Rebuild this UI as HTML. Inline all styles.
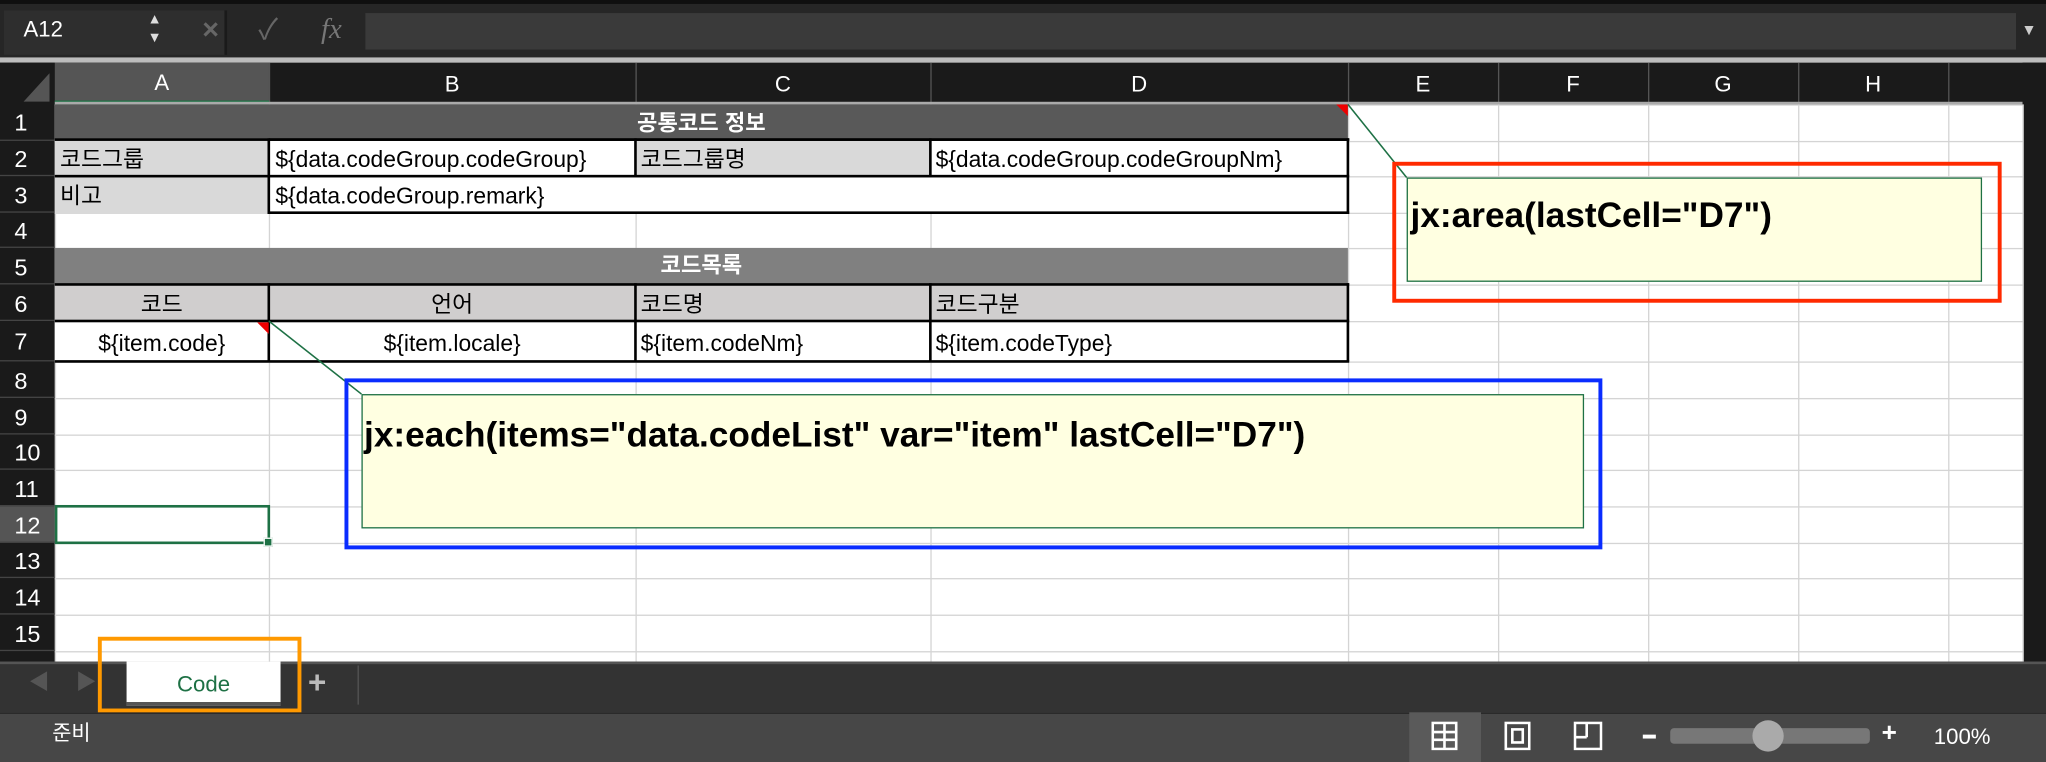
<!DOCTYPE html>
<html><head><meta charset="utf-8">
<style>
html,body{margin:0;padding:0;background:#1e1e1e;overflow:hidden}
#s{position:absolute;left:0;top:0;width:1568px;height:584px;transform:scale(1.30485);transform-origin:0 0;background:#fff;font-family:"Liberation Sans","Noto Sans CJK KR",sans-serif;overflow:hidden}
.a{position:absolute;box-sizing:border-box}
.t{position:absolute;white-space:nowrap;font-size:17.5px;color:#000;line-height:1}
.hv{background:#d4d4d4;width:1px}
.hh{background:#d4d4d4;height:1px}
.ch{position:absolute;top:48px;height:32px;line-height:34px;text-align:center;color:#fff;font-size:17px;border-right:1px solid #555}
.rh{position:absolute;left:0;width:42px;color:#fff;font-size:18px;padding-left:11px;box-sizing:border-box;border-bottom:1px solid #444}
</style></head><body>
<div id="s">
<div class="a" style="left:0;top:0;width:1568px;height:46px;background:#262626"></div>
<div class="a" style="left:0;top:0;width:1568px;height:3px;background:#0f0f0f"></div>
<div class="a" style="left:3px;top:8px;width:170px;height:34px;background:#2e2e2e"></div>
<div class="t" style="left:18px;top:14px;color:#fff;font-size:17px">A12</div>
<div class="t" style="left:113px;top:8px;color:#ddd;font-size:11px;line-height:14px">▲<br>▼</div>
<div class="a" style="left:172px;top:8px;width:2px;height:34px;background:#1a1a1a"></div>
<div class="t" style="left:155px;top:12px;color:#666;font-size:22px;font-weight:bold">×</div>
<div class="t" style="left:198px;top:12px;color:#666;font-size:22px">✓</div>
<div class="t" style="left:246px;top:11px;color:#777;font-size:22px;font-style:italic;font-family:'Liberation Serif',serif">fx</div>
<div class="a" style="left:280px;top:10px;width:1265px;height:28px;background:#3a3a3a"></div>
<div class="t" style="left:1549px;top:17px;color:#ccc;font-size:12px">▼</div>
<div class="a" style="left:0;top:44px;width:1568px;height:4px;background:#bdbdbd"></div>
<div class="a" style="left:0;top:48px;width:1568px;height:32px;background:#1a1a1a"></div>
<div class="a" style="left:0;top:48px;width:42px;height:459px;background:#1a1a1a"></div>
<svg class="a" style="left:18px;top:56px" width="20" height="22"><polygon points="20,0 20,22 0,22" fill="#555"/></svg>
<div class="ch" style="left:42px;width:164px;background:#555;border-bottom:3px solid #1e7145;height:29px;line-height:32px">A</div>
<div class="ch" style="left:206px;width:281px">B</div>
<div class="ch" style="left:487px;width:226px">C</div>
<div class="ch" style="left:713px;width:320px">D</div>
<div class="ch" style="left:1033px;width:115px">E</div>
<div class="ch" style="left:1148px;width:115px">F</div>
<div class="ch" style="left:1263px;width:115px">G</div>
<div class="ch" style="left:1378px;width:115px">H</div>
<div class="ch" style="left:1493px;width:57px;text-align:left;padding-left:57px">I</div>
<div class="a" style="left:1550px;top:48px;width:18px;height:459px;background:#1a1a1a"></div>
<div class="a" style="left:42px;top:78px;width:1508px;height:2px;background:#aaa"></div>
<div id="grid"></div>
<div id="rows"></div>
<div class="a" style="left:42px;top:80px;width:991px;height:27px;background:#595959;color:#fff;font-weight:bold;font-size:17px;text-align:center;line-height:29px">공통코드 정보</div>
<svg class="a" style="left:1024px;top:80px" width="9" height="9"><polygon points="0,0 9,0 9,9" fill="#e00"/></svg>
<div class="a" style="left:206px;top:107px;width:828px;height:57px;background:#fff"></div>
<div class="a" style="left:42px;top:107px;width:165px;height:57px;background:#d9d9d9"></div>
<div class="a" style="left:487px;top:107px;width:227px;height:29px;background:#d9d9d9"></div>
<div class="a" style="left:206px;top:106px;width:828px;height:58px;border:2px solid #000;border-left:0"></div>
<div class="a" style="left:42px;top:106px;width:992px;height:2px;background:#000"></div>
<div class="a" style="left:42px;top:134px;width:992px;height:2px;background:#000"></div>
<div class="a" style="left:205px;top:106px;width:2px;height:58px;background:#000"></div>
<div class="a" style="left:486px;top:106px;width:2px;height:29px;background:#000"></div>
<div class="a" style="left:712px;top:106px;width:2px;height:29px;background:#000"></div>
<div class="t" style="left:46px;top:114px">코드그룹</div>
<div class="t" style="left:211px;top:114px">${data.codeGroup.codeGroup}</div>
<div class="t" style="left:491px;top:114px">코드그룹명</div>
<div class="t" style="left:717px;top:114px">${data.codeGroup.codeGroupNm}</div>
<div class="t" style="left:46px;top:142px">비고</div>
<div class="t" style="left:211px;top:142px">${data.codeGroup.remark}</div>
<div class="a" style="left:42px;top:190px;width:991px;height:28px;background:#808080;color:#fff;font-weight:bold;font-size:17px;text-align:center;line-height:28px">코드목록</div>
<div class="a" style="left:42px;top:218px;width:991px;height:28px;background:#d0cece"></div>
<div class="a" style="left:42px;top:246px;width:991px;height:31px;background:#fff"></div>
<div class="a" style="left:42px;top:217px;width:992px;height:2px;background:#000"></div>
<div class="a" style="left:42px;top:245px;width:992px;height:2px;background:#000"></div>
<div class="a" style="left:42px;top:276px;width:992px;height:2px;background:#000"></div>
<div class="a" style="left:205px;top:217px;width:2px;height:60px;background:#000"></div>
<div class="a" style="left:486px;top:217px;width:2px;height:60px;background:#000"></div>
<div class="a" style="left:712px;top:217px;width:2px;height:60px;background:#000"></div>
<div class="a" style="left:1032px;top:217px;width:2px;height:60px;background:#000"></div>
<div class="t" style="left:42px;width:164px;text-align:center;top:225px">코드</div>
<div class="t" style="left:206px;width:281px;text-align:center;top:225px">언어</div>
<div class="t" style="left:491px;top:225px">코드명</div>
<div class="t" style="left:717px;top:225px">코드구분</div>
<div class="t" style="left:42px;width:164px;text-align:center;top:255px">${item.code}</div>
<div class="t" style="left:206px;width:281px;text-align:center;top:255px">${item.locale}</div>
<div class="t" style="left:491px;top:255px">${item.codeNm}</div>
<div class="t" style="left:717px;top:255px">${item.codeType}</div>
<svg class="a" style="left:197px;top:247px" width="9" height="9"><polygon points="0,0 9,0 9,9" fill="#e00"/></svg>
<div class="a" style="left:42px;top:387px;width:165px;height:30px;border:2px solid #1e7145"></div>
<div class="a" style="left:202px;top:412px;width:7px;height:7px;background:#1e7145;border:1px solid #fff"></div>
<svg class="a" style="left:0;top:0" width="1568" height="584"><line x1="1033" y1="80" x2="1078" y2="136" stroke="#1e7145" stroke-width="1.2"/><line x1="206" y1="246" x2="277" y2="302" stroke="#1e7145" stroke-width="1.2"/></svg>
<div class="a" style="left:1078px;top:136px;width:441px;height:80px;background:#ffffe1;border:1px solid #1e7145"></div>
<div class="t" style="left:1081px;top:152px;font-weight:bold;font-size:27px">jx:area(lastCell="D7")</div>
<div class="a" style="left:1067px;top:124px;width:467px;height:108px;border:3px solid #ff2a00"></div>
<div class="a" style="left:277px;top:302px;width:937px;height:103px;background:#ffffe1;border:1px solid #1e7145"></div>
<div class="t" style="left:279px;top:320px;font-weight:bold;font-size:27px">jx:each(items="data.codeList" var="item" lastCell="D7")</div>
<div class="a" style="left:264px;top:290px;width:964px;height:131px;border:3px solid #0a2cff"></div>
<div class="a" style="left:0;top:507px;width:1568px;height:39px;background:#333;border-top:2px solid #555"></div>
<div class="t" style="left:22px;top:516px;color:#555;font-size:16px">◀</div>
<div class="t" style="left:58px;top:516px;color:#555;font-size:16px">▶</div>
<div class="a" style="left:97px;top:507px;width:118px;height:34px;background:#fff;border-bottom:3px solid #555"></div>
<div class="t" style="left:97px;width:118px;text-align:center;top:516px;color:#1e7145;font-size:17px">Code</div>
<div class="t" style="left:236px;top:512px;color:#bbb;font-size:24px;font-weight:bold">+</div>
<div class="a" style="left:274px;top:510px;width:1px;height:30px;background:#555"></div>
<div class="a" style="left:75px;top:488px;width:156px;height:58px;border:3px solid #ff9900"></div>
<div class="a" style="left:0;top:546px;width:1568px;height:38px;background:#474747;border-top:1px solid #222"></div>
<div class="t" style="left:40px;top:555px;color:#fff;font-size:16px">준비</div>
<div class="a" style="left:1080px;top:546px;width:55px;height:38px;background:#5a5a5a"></div>
<svg class="a" style="left:1097px;top:553px" width="20" height="22"><rect x="1" y="1" width="18" height="20" fill="none" stroke="#fff" stroke-width="2"/><line x1="1" y1="8" x2="19" y2="8" stroke="#fff" stroke-width="2"/><line x1="1" y1="14" x2="19" y2="14" stroke="#fff" stroke-width="2"/><line x1="10" y1="1" x2="10" y2="21" stroke="#fff" stroke-width="2"/></svg>
<svg class="a" style="left:1153px;top:553px" width="20" height="22"><rect x="1" y="1" width="18" height="20" fill="none" stroke="#fff" stroke-width="2"/><rect x="6" y="6" width="8" height="10" fill="none" stroke="#fff" stroke-width="2"/></svg>
<svg class="a" style="left:1206px;top:553px" width="22" height="22"><rect x="1" y="1" width="20" height="20" fill="none" stroke="#fff" stroke-width="2"/><line x1="10" y1="1" x2="10" y2="12" stroke="#fff" stroke-width="2"/><line x1="1" y1="12" x2="10" y2="12" stroke="#fff" stroke-width="2"/></svg>
<div class="a" style="left:1259px;top:563px;width:10px;height:3px;background:#fff"></div>
<div class="a" style="left:1280px;top:558px;width:153px;height:12px;background:#777;border-radius:3px"></div>
<div class="a" style="left:1343px;top:552px;width:24px;height:24px;background:#aaa;border-radius:50%"></div>
<div class="t" style="left:1442px;top:552px;color:#fff;font-size:20px;font-weight:bold">+</div>
<div class="t" style="left:1482px;top:556px;color:#fff;font-size:17px">100%</div>
</div>
<script>
var cols=[42,206,487,713,1033,1148,1263,1378,1493,1550];
var rows=[80,107.5,135,163,190,218,246,277,305,333,360,388,416,443,471,499,527];
var g='';
cols.forEach(function(x){g+='<div class="a hv" style="left:'+x+'px;top:80px;height:427px"></div>';});
rows.forEach(function(y){g+='<div class="a hh" style="left:42px;top:'+y+'px;width:1508px"></div>';});
document.getElementById('grid').innerHTML=g;
var r='';
for(var i=0;i<15;i++){var t=rows[i],h=rows[i+1]-t;r+='<div class="rh" style="top:'+t+'px;height:'+h+'px;line-height:'+(h+2)+'px;'+(i==11?'background:#555;':'')+'">'+(i+1)+'</div>';}
document.getElementById('rows').innerHTML=r;
</script>
</body></html>
